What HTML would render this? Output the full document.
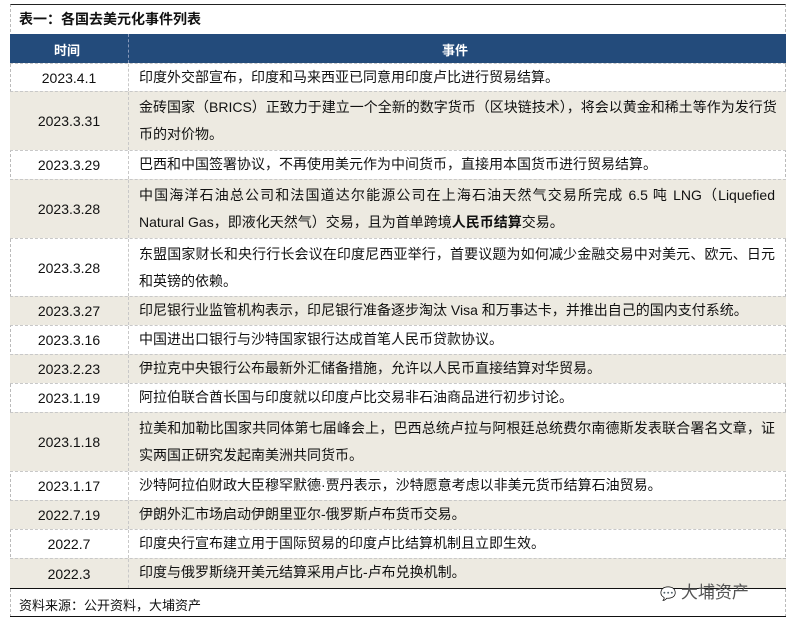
<!DOCTYPE html>
<html><head><meta charset="utf-8"><style>
*{margin:0;padding:0;box-sizing:border-box}
body{width:796px;height:625px;background:#fff;font-family:"Liberation Sans","Noto Sans CJK SC",sans-serif;font-size:14px;color:#111;position:relative;overflow:hidden}
.box{position:absolute;left:10px;top:4px;width:776px;height:613px;border:1px solid #222;border-left:1px dashed #bbb;border-right:1px dashed #bbb}
.title{position:absolute;left:19px;top:9px;font-weight:bold;font-size:14px}
.hdr{position:absolute;left:10px;top:34px;width:776px;height:29px;background:#234b7b;color:#fff;font-weight:bold;font-size:13px}
.hdr div{position:absolute;top:6px}
.row{position:absolute;left:10px;width:776px;border-top:1px dashed #c8c8c8}
.row.b{background:#edeae1}
.d{position:absolute;left:0;width:118px;text-align:center;top:50%;transform:translateY(-50%);font-size:14px}
.t{position:absolute;left:118px;top:0;bottom:0;border-left:1px dashed #c8c8c8;padding-left:10px;width:656px}
.t .l{height:27px;line-height:27px;white-space:nowrap}
.t .j{text-align:justify;text-align-last:justify;width:636px}
.foot{position:absolute;left:10px;top:588px;width:776px;border-top:1.5px solid #111;height:29px;border-bottom:1.5px solid #111;font-size:13px}
.foot div{position:absolute;left:9px;top:6px}
.wm{position:absolute;left:660px;top:578px;color:#555;font-size:17px}
</style></head><body>
<div class="box"></div>
<div class="title">表一：各国去美元化事件列表</div>
<div class="hdr"><div style="left:44px">时间</div><div style="left:432px">事件</div><div style="position:absolute;left:118px;top:0;height:29px;border-left:1px dashed #8899bb"></div></div>

<div class="row" style="top:63px;height:28px"><div class="d">2023.4.1</div><div class="t"><div class="l">印度外交部宣布，印度和马来西亚已同意用印度卢比进行贸易结算。</div></div></div>
<div class="row b" style="top:91px;height:59px"><div class="d">2023.3.31</div><div class="t" style="padding-top:2px"><div class="l j">金砖国家（BRICS）正致力于建立一个全新的数字货币（区块链技术），将会以黄金和稀土等作为发行货</div><div class="l">币的对价物。</div></div></div>
<div class="row" style="top:150px;height:29px"><div class="d">2023.3.29</div><div class="t"><div class="l">巴西和中国签署协议，不再使用美元作为中间货币，直接用本国货币进行贸易结算。</div></div></div>
<div class="row b" style="top:179px;height:59px"><div class="d">2023.3.28</div><div class="t" style="padding-top:2px"><div class="l j">中国海洋石油总公司和法国道达尔能源公司在上海石油天然气交易所完成 6.5 吨 LNG（Liquefied</div><div class="l">Natural Gas，即液化天然气）交易，且为首单跨境<b>人民币结算</b>交易。</div></div></div>
<div class="row" style="top:238px;height:58px"><div class="d">2023.3.28</div><div class="t" style="padding-top:2px"><div class="l j">东盟国家财长和央行行长会议在印度尼西亚举行，首要议题为如何减少金融交易中对美元、欧元、日元</div><div class="l">和英镑的依赖。</div></div></div>
<div class="row b" style="top:296px;height:29px"><div class="d">2023.3.27</div><div class="t"><div class="l">印尼银行业监管机构表示，印尼银行准备逐步淘汰 Visa 和万事达卡，并推出自己的国内支付系统。</div></div></div>
<div class="row" style="top:325px;height:29px"><div class="d">2023.3.16</div><div class="t"><div class="l">中国进出口银行与沙特国家银行达成首笔人民币贷款协议。</div></div></div>
<div class="row b" style="top:354px;height:29px"><div class="d">2023.2.23</div><div class="t"><div class="l">伊拉克中央银行公布最新外汇储备措施，允许以人民币直接结算对华贸易。</div></div></div>
<div class="row" style="top:383px;height:29px"><div class="d">2023.1.19</div><div class="t"><div class="l">阿拉伯联合酋长国与印度就以印度卢比交易非石油商品进行初步讨论。</div></div></div>
<div class="row b" style="top:412px;height:59px"><div class="d">2023.1.18</div><div class="t" style="padding-top:2px"><div class="l j">拉美和加勒比国家共同体第七届峰会上，巴西总统卢拉与阿根廷总统费尔南德斯发表联合署名文章，证</div><div class="l">实两国正研究发起南美洲共同货币。</div></div></div>
<div class="row" style="top:471px;height:29px"><div class="d">2023.1.17</div><div class="t"><div class="l">沙特阿拉伯财政大臣穆罕默德·贾丹表示，沙特愿意考虑以非美元货币结算石油贸易。</div></div></div>
<div class="row b" style="top:500px;height:29px"><div class="d">2022.7.19</div><div class="t"><div class="l">伊朗外汇市场启动伊朗里亚尔-俄罗斯卢布货币交易。</div></div></div>
<div class="row" style="top:529px;height:29px"><div class="d">2022.7</div><div class="t"><div class="l">印度央行宣布建立用于国际贸易的印度卢比结算机制且立即生效。</div></div></div>
<div class="row b" style="top:558px;height:30px"><div class="d">2022.3</div><div class="t"><div class="l">印度与俄罗斯绕开美元结算采用卢比-卢布兑换机制。</div></div></div>
<div class="foot"><div>资料来源：公开资料，大埔资产</div></div>
<div class="wm"><span style="font-size:13px;color:#aaa">💬</span> 大埔资产</div>
</body></html>
